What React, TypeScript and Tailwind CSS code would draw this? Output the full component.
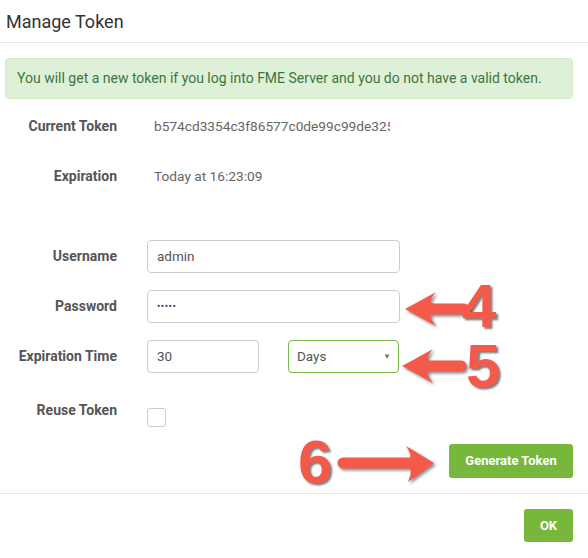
import React from "react";

const Label = ({ children }: { children: React.ReactNode }) => (
  <div className="w-[117px] shrink-0 text-right text-[14px] font-bold text-[#555]">{children}</div>
);

export default function App() {
  return (
    <div className="relative w-[588px] h-[558px] overflow-hidden bg-white font-['Roboto','Liberation_Sans',sans-serif]">
      {/* Header */}
      <div className="h-[43px] border-b border-[#e5e5e5] px-[6px] flex items-center text-[18px] text-[#333]">
        Manage Token
      </div>

      {/* Body */}
      <div className="pt-[15px] pr-[15px]">
        <div className="ml-[5px] h-[41px] rounded-[4px] border border-[#d6e9c6] bg-[#dff0d8] px-[11px] flex items-center text-[14px] text-[#3c763d]">
          You will get a new token if you log into FME Server and you do not have a valid token.
        </div>

        <div className="mt-[11px] h-[33px] flex items-center gap-[30px]">
          <Label>Current Token</Label>
          <div className="ml-[7px] w-[236px] overflow-hidden whitespace-nowrap text-[13.7px] text-[#666]">
            b574cd3354c3f86577c0de99c99de325a1f08c
          </div>
        </div>

        <div className="mt-[17px] h-[33px] flex items-center gap-[30px]">
          <Label>Expiration</Label>
          <div className="ml-[7px] text-[13.7px] text-[#666]">Today at 16:23:09</div>
        </div>

        <div className="mt-[47px] h-[33px] flex items-center gap-[30px]">
          <Label>Username</Label>
          <div className="w-[253px] h-[33px] rounded-[4px] border border-[#ccc] pl-[9px] flex items-center text-[13.5px] text-[#555]">
            admin
          </div>
        </div>

        <div className="mt-[17px] h-[33px] flex items-center gap-[30px]">
          <Label>Password</Label>
          <div className="w-[253px] h-[33px] rounded-[4px] border border-[#ccc] pl-[9px] flex items-center text-[10px] tracking-[0.5px] text-[#444]">
            •••••
          </div>
        </div>

        <div className="mt-[17px] h-[33px] flex items-center gap-[30px]">
          <Label>Expiration Time</Label>
          <div className="w-[112px] h-[33px] rounded-[4px] border border-[#ccc] pl-[9px] flex items-center text-[13.5px] text-[#555]">
            30
          </div>
          <div className="-ml-[1px] w-[111px] h-[33px] rounded-[4px] border border-[#7ab648] pl-[8px] pr-[7px] flex items-center justify-between text-[13.5px] text-[#555]">
            <span>Days</span>
            <span className="text-[8px] text-[#777]">▼</span>
          </div>
        </div>

        <div className="mt-[27px] flex items-start gap-[30px]">
          <div className="leading-[20px]">
            <Label>Reuse Token</Label>
          </div>
          <div className="mt-[8px] w-[19px] h-[19px] rounded-[3px] border border-[#ccc] bg-white"></div>
        </div>

        <div className="mt-[17px] flex justify-end">
          <div className="w-[124px] h-[34px] rounded-[3px] bg-[#77b73b] flex items-center justify-center text-[13px] font-bold text-white">
            Generate Token
          </div>
        </div>
      </div>

      {/* Footer */}
      <div className="mt-[15px] border-t border-[#e5e5e5] pt-[15px] pr-[15px] flex justify-end">
        <div className="w-[49px] h-[33px] rounded-[3px] bg-[#77b73b] flex items-center justify-center text-[13px] font-bold text-white">
          OK
        </div>
      </div>

      {/* Annotation arrows */}
      <svg
        className="absolute left-0 top-0 pointer-events-none drop-shadow-[2px_2px_1.5px_rgba(0,0,0,0.45)]"
        width="588"
        height="558"
        viewBox="0 0 588 558"
      >
        <path
          fill="#f5594a"
          d="M405 309 L436 292 Q429 300 431 303.5 L464 303.5 A5.5 5.5 0 0 1 464 314.5 L431 314.5 Q429 318 436 326 Z"
        />
        <g transform="translate(-3 57)">
          <path
            fill="#f5594a"
            d="M405 309 L436 292 Q429 300 431 303.5 L464 303.5 A5.5 5.5 0 0 1 464 314.5 L431 314.5 Q429 318 436 326 Z"
          />
        </g>
        <path
          fill="#f5594a"
          d="M434 463 L406 446 Q412 455 410 457.5 L343 457.5 A5.5 5.5 0 0 0 343 468.5 L410 468.5 Q412 472 408 482 Z"
        />
      </svg>

      {/* Annotation numbers */}
      <div className="absolute left-[462px] top-[282px] text-[62px] leading-[48px] font-bold text-[#f5594a] font-['Liberation_Sans',Arial,sans-serif] [text-shadow:2px_2px_2px_rgba(0,0,0,0.5)]">
        4
      </div>
      <div className="absolute left-[466px] top-[342px] text-[62px] leading-[48px] font-bold text-[#f5594a] font-['Liberation_Sans',Arial,sans-serif] [text-shadow:2px_2px_2px_rgba(0,0,0,0.5)]">
        5
      </div>
      <div className="absolute left-[298px] top-[438px] text-[62px] leading-[48px] font-bold text-[#f5594a] font-['Liberation_Sans',Arial,sans-serif] [text-shadow:2px_2px_2px_rgba(0,0,0,0.5)]">
        6
      </div>
    </div>
  );
}
